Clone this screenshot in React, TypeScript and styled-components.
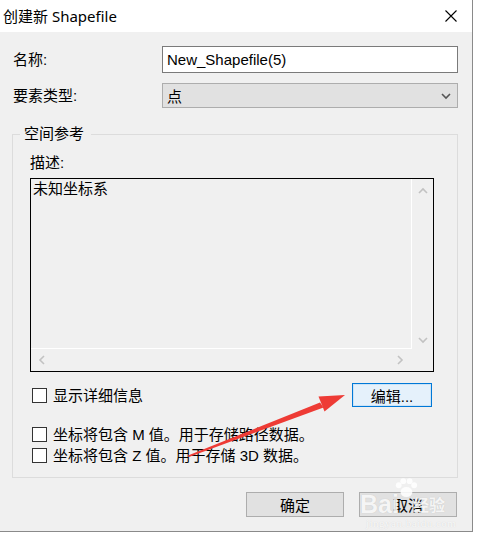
import styled, { createGlobalStyle } from 'styled-components';

const GlobalStyle = createGlobalStyle`
  html, body {
    margin: 0;
    padding: 0;
    background: #ffffff;
  }
  * {
    box-sizing: border-box;
  }
`;

type Dir = 'up' | 'down' | 'left' | 'right';

const chevronPaths: Record<Dir, string> = {
  up: 'M1 6 L5 2 L9 6',
  down: 'M1 2 L5 6 L9 2',
  left: 'M6 1 L2 5 L6 9',
  right: 'M2 1 L6 5 L2 9',
};

function Chevron({ dir, color = '#c2c2c2' }: { dir: Dir; color?: string }) {
  const vertical = dir === 'up' || dir === 'down';
  return (
    <svg
      width={vertical ? 10 : 8}
      height={vertical ? 8 : 10}
      viewBox={vertical ? '0 0 10 8' : '0 0 8 10'}
    >
      <path d={chevronPaths[dir]} fill="none" stroke={color} strokeWidth="1.6" />
    </svg>
  );
}

export default function App() {
  return (
    <>
      <GlobalStyle />
      <Window>
        <TitleBar>
          <Title>创建新 Shapefile</Title>
          <CloseButton>
            <svg width="12" height="12" viewBox="0 0 12 12">
              <path d="M0.5 0.5 L11.5 11.5 M11.5 0.5 L0.5 11.5" stroke="#000" strokeWidth="1.1" />
            </svg>
          </CloseButton>
        </TitleBar>

        <Body>
          <FormRow>
            <Label>名称:</Label>
            <TextInput>New_Shapefile(5)</TextInput>
          </FormRow>
          <FormRow $gap={10}>
            <Label>要素类型:</Label>
            <Combo>
              <span>点</span>
              <Chevron dir="down" color="#555" />
            </Combo>
          </FormRow>

          <Group>
            <Legend>空间参考</Legend>
            <SubLabel>描述:</SubLabel>
            <DescBox>
              <DescText>未知坐标系</DescText>
              <VScroll>
                <Chevron dir="up" />
                <Chevron dir="down" />
              </VScroll>
              <HScroll>
                <Chevron dir="left" />
                <Chevron dir="right" />
              </HScroll>
              <Corner />
            </DescBox>

            <DetailRow>
              <Check>
                <Box />
                显示详细信息
              </Check>
              <Button $focused $width={80} $height={24}>
                编辑...
              </Button>
            </DetailRow>

            <OptionList>
              <Check>
                <Box />
                坐标将包含 M 值。用于存储路径数据。
              </Check>
              <Check>
                <Box />
                坐标将包含 Z 值。用于存储 3D 数据。
              </Check>
            </OptionList>
          </Group>

          <Footer>
            <Button $width={98} $height={25}>确定</Button>
            <Button $width={98} $height={25}>取消</Button>
          </Footer>
        </Body>

        <Arrow width="477" height="534" viewBox="0 0 477 534">
          <polygon
            points="188,455.5 320,402.5 323.5,407.5 189,457"
            fill="#ee3b35"
          />
          <polygon points="345,395 318.5,396.5 324.5,411.5" fill="#ee3b35" />
        </Arrow>

        <Watermark>
          <Paw width="24" height="20" viewBox="0 0 26 22">
            <circle cx="5" cy="8" r="3.2" />
            <circle cx="10" cy="3.5" r="3.2" />
            <circle cx="17" cy="3.5" r="3.2" />
            <circle cx="22" cy="8" r="3.2" />
            <ellipse cx="13.5" cy="15.5" rx="6.5" ry="5.5" />
          </Paw>
          <MarkLine>
            <MarkBig>Bai</MarkBig>
            <MarkGap />
            <MarkCjk>经验</MarkCjk>
          </MarkLine>
          <MarkUrl>jingyan.baidu.com</MarkUrl>
        </Watermark>
      </Window>
    </>
  );
}

const Window = styled.div`
  position: relative;
  width: 473px;
  height: 532px;
  background: #f0f0f0;
  border-right: 1px solid #8a8a8a;
  border-bottom: 1px solid #8a8a8a;
  display: flex;
  flex-direction: column;
  font-family: 'Liberation Sans', 'Noto Sans CJK SC', sans-serif;
  font-size: 15px;
  color: #000;
`;

const TitleBar = styled.div`
  height: 32px;
  background: #ffffff;
  display: flex;
  align-items: center;
  justify-content: space-between;
  padding: 0 15px 0 3px;
`;

const Title = styled.div`
  font-family: 'Noto Sans', 'Noto Sans CJK SC', sans-serif;
  font-size: 15px;
  line-height: 20px;
  margin-top: -1px;
`;

const CloseButton = styled.div`
  display: flex;
`;

const Body = styled.div`
  flex: 1;
  display: flex;
  flex-direction: column;
  padding: 14px 14px 0 12px;
`;

const FormRow = styled.div<{ $gap?: number }>`
  display: grid;
  grid-template-columns: 149px 1fr;
  align-items: center;
  padding-left: 1px;
  margin-top: ${(p) => p.$gap ?? 0}px;
`;

const Label = styled.div`
  line-height: 20px;
`;

const TextInput = styled.div`
  height: 27px;
  background: #ffffff;
  border: 1px solid #7a7a7a;
  padding: 0 4px;
  display: flex;
  align-items: center;
`;

const Combo = styled.div`
  height: 25px;
  background: #e1e1e1;
  border: 1px solid #adadad;
  padding: 0 6px 0 4px;
  display: flex;
  align-items: center;
  justify-content: space-between;
`;

const Group = styled.fieldset`
  margin: 16px 0 0 0;
  min-width: 0;
  border: 1px solid #dcdcdc;
  padding: 0 23px 11px 17px;
  display: flex;
  flex-direction: column;
`;

const Legend = styled.legend`
  margin-left: -10px;
  padding: 0 7px 0 4px;
  line-height: 20px;
`;

const SubLabel = styled.div`
  margin-top: 9px;
  line-height: 20px;
`;

const DescBox = styled.div`
  margin-top: 5px;
  height: 194px;
  border: 1px solid #000;
  display: grid;
  grid-template-columns: 1fr 21px;
  grid-template-rows: 1fr 22px;
`;

const DescText = styled.div`
  border-right: 1px solid #ffffff;
  border-bottom: 1px solid #ffffff;
  padding: 1px 2px;
  line-height: 18px;
`;

const VScroll = styled.div`
  display: flex;
  flex-direction: column;
  align-items: center;
  justify-content: space-between;
  padding: 8px 0 5px 0;
`;

const HScroll = styled.div`
  display: flex;
  align-items: center;
  justify-content: space-between;
  padding: 0 8px 0 7px;
`;

const Corner = styled.div``;

const DetailRow = styled.div`
  margin-top: 11px;
  display: flex;
  align-items: center;
  justify-content: space-between;
  padding: 0 2px 0 2px;
`;

const OptionList = styled.div`
  margin-top: 17px;
  display: flex;
  flex-direction: column;
  padding-left: 2px;
`;

const Check = styled.label`
  display: flex;
  align-items: center;
  gap: 6px;
  height: 21px;
  line-height: 21px;
  white-space: nowrap;
`;

const Box = styled.span`
  width: 15px;
  height: 15px;
  background: #ffffff;
  border: 1px solid #333;
  flex-shrink: 0;
`;

const Button = styled.div<{ $focused?: boolean; $width: number; $height: number }>`
  width: ${(p) => p.$width}px;
  height: ${(p) => p.$height}px;
  display: flex;
  align-items: center;
  justify-content: center;
  background: ${(p) => (p.$focused ? '#e5f1fb' : '#e1e1e1')};
  border: 1px solid ${(p) => (p.$focused ? '#0078d7' : '#adadad')};
  box-shadow: ${(p) => (p.$focused ? 'inset 0 0 0 1px #cce4f7' : 'none')};
`;

const Footer = styled.div`
  margin-top: 14px;
  display: flex;
  justify-content: flex-end;
  gap: 15px;
  padding-right: 1px;
`;

const Arrow = styled.svg`
  position: absolute;
  left: 0;
  top: 0;
  pointer-events: none;
`;

const Watermark = styled.div`
  position: absolute;
  left: 360px;
  top: 478px;
  width: 100px;
  display: flex;
  flex-direction: column;
  align-items: flex-start;
  color: rgba(255, 255, 255, 0.85);
  pointer-events: none;
`;

const Paw = styled.svg`
  margin-left: 34px;
  fill: rgba(255, 255, 255, 0.85);
`;

const MarkLine = styled.div`
  display: flex;
  align-items: center;
  margin-top: -6px;
  height: 24px;
`;

const MarkBig = styled.span`
  font-family: 'Liberation Sans', sans-serif;
  font-weight: 700;
  font-size: 25px;
  text-shadow: 0 0 1px rgba(0, 0, 0, 0.15);
`;

const MarkGap = styled.span`
  width: 14px;
`;

const MarkCjk = styled.span`
  font-size: 16px;
  font-weight: 700;
  text-shadow: 0 0 1px rgba(0, 0, 0, 0.15);
`;

const MarkUrl = styled.span`
  font-family: 'Liberation Serif', serif;
  font-size: 11px;
  margin-top: 1px;
  margin-left: 6px;
  letter-spacing: 0.5px;
  text-shadow: 0 0 1px rgba(0, 0, 0, 0.15);
`;
